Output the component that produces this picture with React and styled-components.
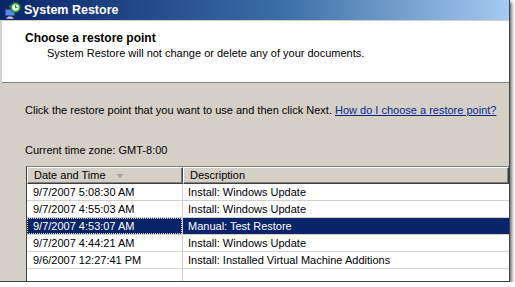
import React from 'react';
import styled, { createGlobalStyle } from 'styled-components';

const GlobalStyle = createGlobalStyle`
  html, body {
    margin: 0;
    padding: 0;
    background: #ffffff;
  }
  body {
    font-family: 'Liberation Sans', Arial, sans-serif;
    font-size: 11px;
    color: #000;
  }
`;

const restorePoints = [
  { date: '9/7/2007 5:08:30 AM', desc: 'Install: Windows Update' },
  { date: '9/7/2007 4:55:03 AM', desc: 'Install: Windows Update' },
  { date: '9/7/2007 4:53:07 AM', desc: 'Manual: Test Restore', selected: true },
  { date: '9/7/2007 4:44:21 AM', desc: 'Install: Windows Update' },
  { date: '9/6/2007 12:27:41 PM', desc: 'Install: Installed Virtual Machine Additions' },
];

const RestoreIcon = () => (
  <svg width="17" height="17" viewBox="0 0 17 17">
    <rect x="0.5" y="6.5" width="11" height="8" fill="#2a4fa8" stroke="#1a2a5a" />
    <rect x="2" y="8" width="8" height="5" fill="#5a8ae0" />
    <rect x="4" y="14.5" width="4" height="1.5" fill="#b8b8b8" />
    <rect x="2.5" y="15.5" width="7" height="1.2" fill="#e0e0e0" />
    <circle cx="11.5" cy="5.5" r="5" fill="#3aa83a" stroke="#1d6a1d" strokeWidth="0.8" />
    <circle cx="11.5" cy="5.5" r="3.3" fill="#eaf7ea" />
    <path d="M11.5 3.2 V5.6 H13.4" stroke="#1d5a1d" strokeWidth="0.9" fill="none" />
    <path d="M5.5 3 L7.6 4.6 L5.3 5.8 Z" fill="#2e8e2e" />
  </svg>
);

const App = () => (
  <>
    <GlobalStyle />
    <Window>
      <TitleBar>
        <RestoreIcon />
        <TitleText>System Restore</TitleText>
      </TitleBar>
      <Frame>
        <Header>
          <HeaderTitle>Choose a restore point</HeaderTitle>
          <HeaderSub>System Restore will not change or delete any of your documents.</HeaderSub>
        </Header>
        <Body>
          <Instruction>
            Click the restore point that you want to use and then click Next.{' '}
            <HelpLink>How do I choose a restore point?</HelpLink>
          </Instruction>
          <TimeZone>Current time zone: GMT-8:00</TimeZone>
          <ListView>
            <ListHead>
              <HeadCell $width={156}>
                Date and Time
                <SortArrow />
              </HeadCell>
              <HeadCell>Description</HeadCell>
            </ListHead>
            {restorePoints.map((point) => (
              <Row key={point.date} $selected={point.selected}>
                <DateCell $selected={point.selected}>
                  <CellText $focused={point.selected}>{point.date}</CellText>
                </DateCell>
                <DescCell>{point.desc}</DescCell>
              </Row>
            ))}
            <Row>
              <DateCell />
              <DescCell />
            </Row>
          </ListView>
        </Body>
      </Frame>
    </Window>
  </>
);

export default App;

const Window = styled.div`
  width: 509px;
  height: 281px;
  display: flex;
  flex-direction: column;
  background: #d4d0c8;
  border-right: 1px solid #404040;
  border-bottom: 1px solid #404040;
  box-shadow: 2px 2px 3px rgba(0, 0, 0, 0.55);
  overflow: hidden;
`;

const TitleBar = styled.div`
  height: 20px;
  flex: none;
  display: flex;
  align-items: center;
  gap: 3px;
  padding-left: 4px;
  box-sizing: border-box;
  background: linear-gradient(to right, #0a246a 0%, #3a6ea5 55%, #a6caf0 100%);
`;

const TitleText = styled.span`
  color: #fff;
  font-family: 'Liberation Sans', Arial, sans-serif;
  font-weight: bold;
  font-size: 12.5px;
`;

const Frame = styled.div`
  flex: 1;
  display: flex;
  flex-direction: column;
  padding: 1px 0 0 2px;
  min-height: 0;
`;

const Header = styled.div`
  height: 62px;
  flex: none;
  box-sizing: border-box;
  background: #fff;
  border-bottom: 1px solid #808080;
  padding: 11px 0 0 23px;
`;

const HeaderTitle = styled.div`
  font-weight: bold;
  font-size: 12px;
  line-height: 13px;
`;

const HeaderSub = styled.div`
  margin-top: 2px;
  padding-left: 22px;
  line-height: 13px;
`;

const Body = styled.div`
  flex: 1;
  display: flex;
  flex-direction: column;
  padding: 21px 0 0 23px;
  min-height: 0;
`;

const Instruction = styled.div`
  line-height: 13px;
`;

const HelpLink = styled.a`
  color: #0b1f8f;
  text-decoration: underline;
  cursor: pointer;
`;

const TimeZone = styled.div`
  margin-top: 27px;
  line-height: 13px;
`;

const ListView = styled.div`
  flex: 1;
  margin: 9px 0 0 1px;
  background: #fff;
  border-top: 1px solid #808080;
  border-left: 1px solid #404040;
  box-shadow: inset 1px 1px 0 #404040;
  display: flex;
  flex-direction: column;
`;

const ListHead = styled.div`
  display: flex;
  height: 17px;
  flex: none;
`;

const HeadCell = styled.div`
  flex: ${(props) => (props.$width ? `0 0 ${props.$width}px` : '1')};
  box-sizing: border-box;
  display: flex;
  align-items: center;
  padding-left: 6px;
  background: #d4d0c8;
  border-top: 1px solid #fff;
  border-left: 1px solid #fff;
  border-right: 1px solid #404040;
  border-bottom: 1px solid #404040;
  box-shadow: inset -1px -1px 0 #808080;
  line-height: 13px;
`;

const SortArrow = styled.span`
  margin-left: 10px;
  width: 0;
  height: 0;
  border-left: 4px solid transparent;
  border-right: 4px solid transparent;
  border-top: 4px solid #a7a6aa;
`;

const Row = styled.div`
  display: flex;
  height: 17px;
  flex: none;
  box-sizing: border-box;
  border-bottom: 1px solid #d4d0c8;
  background: ${(props) => (props.$selected ? '#0a246a' : '#fff')};
  color: ${(props) => (props.$selected ? '#fff' : '#000')};
`;

const DateCell = styled.div`
  flex: 0 0 156px;
  box-sizing: border-box;
  display: flex;
  align-items: stretch;
  padding: ${(props) => (props.$selected ? '0' : '0 0 0 6px')};
  border-right: 1px solid #d4d0c8;
`;

const CellText = styled.span`
  flex: 1;
  display: flex;
  align-items: center;
  padding-left: ${(props) => (props.$focused ? '5px' : '0')};
  border: ${(props) => (props.$focused ? '1px dotted #d4d0c8' : 'none')};
`;

const DescCell = styled.div`
  flex: 1;
  display: flex;
  align-items: center;
  padding-left: 5px;
`;
